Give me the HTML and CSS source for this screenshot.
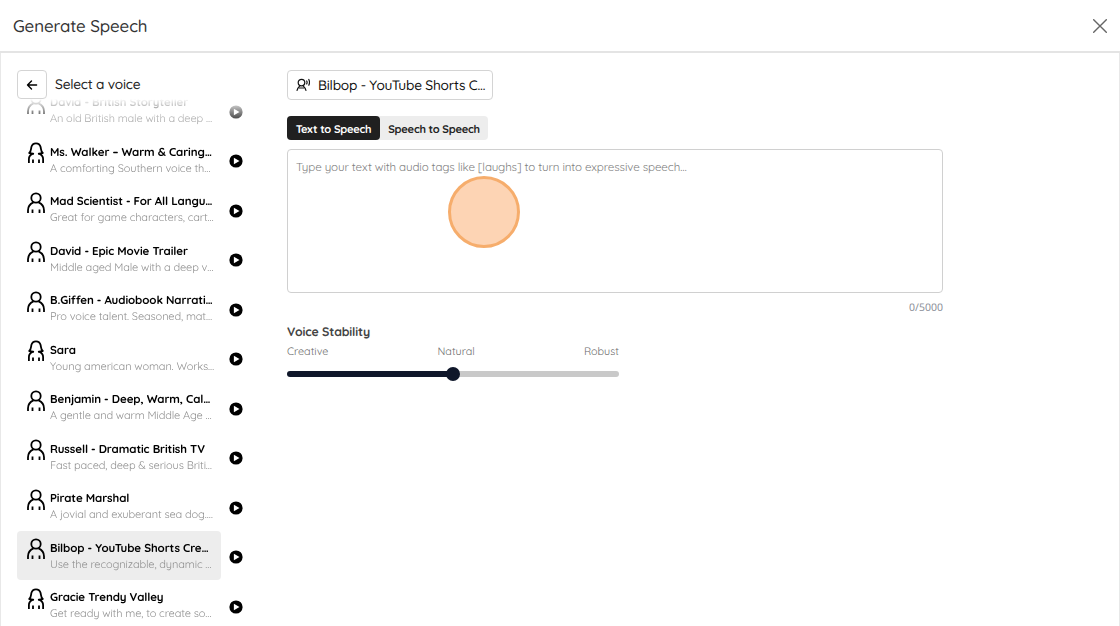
FILE: index.html
```html
<!DOCTYPE html>
<html lang="en">
<head>
    <meta charset="UTF-8">
    <meta name="viewport" content="width=device-width, initial-scale=1.0">
    <title>Generate Speech</title>
    <link rel="stylesheet" href="styles.css">
</head>
<body>
    <!-- shared icons -->
    <svg class="icon-defs" aria-hidden="true">
        <symbol id="icon-male" viewBox="0 0 18 22">
            <circle cx="9" cy="6" r="4.700"/>
            <path d="M1 21v-2.700c0-3.800 2-6.300 5.400-7.900M17 21v-2.700c0-3.800-2-6.300-5.400-7.900M5.500 17.600v3.400M12.500 17.600v3.400"/>
        </symbol>
        <symbol id="icon-female" viewBox="0 0 18 22">
            <path d="M7 11.900L2.200 11C4.200 9.300 3.900 7 4.400 4.900C5 2.600 6.600 1.300 9 1.300S13 2.600 13.600 4.900C14.100 7 13.800 9.300 15.800 11L11 11.900M5.500 11.900C3 13 1.900 14.700 1.900 17v4M12.500 11.900C15 13 16.100 14.700 16.100 17v4M6 17.600v3.400M12 17.600v3.400"/>
        </symbol>
        <symbol id="icon-play" viewBox="0 0 14 14">
            <circle cx="7" cy="7" r="6.600"/>
            <path d="M4.900 3.700v6.600L10.500 7z"/>
        </symbol>
    </svg>

    <div class="header">
        <h1>Generate Speech</h1>
        <button class="close-btn" aria-label="Close">
            <svg viewBox="0 0 14 14"><path d="M.7.7l12.600 12.600M13.300.7L.7 13.300"/></svg>
        </button>
    </div>

    <div class="content">
        <div class="sidebar">
            <div class="sidebar-header">
                <button class="back-btn" aria-label="Back">
                    <svg viewBox="0 0 12 12"><path d="M10.600 6H1.500M5.500 2L1.500 6l4 4"/></svg>
                </button>
                <h2>Select a voice</h2>
            </div>

            <div class="voice-list">
                <div class="voice">
                    <div class="voice-card">
                        <svg class="avatar"><use href="#icon-male"/></svg>
                        <div class="voice-text">
                            <div class="name">David - British Storyteller</div>
                            <div class="desc">An old British male with a deep …</div>
                        </div>
                    </div>
                    <svg class="play"><use href="#icon-play"/></svg>
                </div>
                <div class="voice">
                    <div class="voice-card">
                        <svg class="avatar"><use href="#icon-female"/></svg>
                        <div class="voice-text">
                            <div class="name">Ms. Walker – Warm &amp; Caring…</div>
                            <div class="desc">A comforting Southern voice th…</div>
                        </div>
                    </div>
                    <svg class="play"><use href="#icon-play"/></svg>
                </div>
                <div class="voice">
                    <div class="voice-card">
                        <svg class="avatar"><use href="#icon-male"/></svg>
                        <div class="voice-text">
                            <div class="name">Mad Scientist - For All Langu…</div>
                            <div class="desc">Great for game characters, cart…</div>
                        </div>
                    </div>
                    <svg class="play"><use href="#icon-play"/></svg>
                </div>
                <div class="voice">
                    <div class="voice-card">
                        <svg class="avatar"><use href="#icon-male"/></svg>
                        <div class="voice-text">
                            <div class="name">David - Epic Movie Trailer</div>
                            <div class="desc">Middle aged Male with a deep v…</div>
                        </div>
                    </div>
                    <svg class="play"><use href="#icon-play"/></svg>
                </div>
                <div class="voice">
                    <div class="voice-card">
                        <svg class="avatar"><use href="#icon-male"/></svg>
                        <div class="voice-text">
                            <div class="name">B.Giffen - Audiobook Narrati…</div>
                            <div class="desc">Pro voice talent. Seasoned, mat…</div>
                        </div>
                    </div>
                    <svg class="play"><use href="#icon-play"/></svg>
                </div>
                <div class="voice">
                    <div class="voice-card">
                        <svg class="avatar"><use href="#icon-female"/></svg>
                        <div class="voice-text">
                            <div class="name">Sara</div>
                            <div class="desc">Young american woman. Works…</div>
                        </div>
                    </div>
                    <svg class="play"><use href="#icon-play"/></svg>
                </div>
                <div class="voice">
                    <div class="voice-card">
                        <svg class="avatar"><use href="#icon-male"/></svg>
                        <div class="voice-text">
                            <div class="name">Benjamin - Deep, Warm, Cal…</div>
                            <div class="desc">A gentle and warm Middle Age …</div>
                        </div>
                    </div>
                    <svg class="play"><use href="#icon-play"/></svg>
                </div>
                <div class="voice">
                    <div class="voice-card">
                        <svg class="avatar"><use href="#icon-male"/></svg>
                        <div class="voice-text">
                            <div class="name">Russell - Dramatic British TV</div>
                            <div class="desc">Fast paced, deep &amp; serious Briti…</div>
                        </div>
                    </div>
                    <svg class="play"><use href="#icon-play"/></svg>
                </div>
                <div class="voice">
                    <div class="voice-card">
                        <svg class="avatar"><use href="#icon-male"/></svg>
                        <div class="voice-text">
                            <div class="name">Pirate Marshal</div>
                            <div class="desc">A jovial and exuberant sea dog.…</div>
                        </div>
                    </div>
                    <svg class="play"><use href="#icon-play"/></svg>
                </div>
                <div class="voice">
                    <div class="voice-card selected">
                        <svg class="avatar"><use href="#icon-male"/></svg>
                        <div class="voice-text">
                            <div class="name">Bilbop - YouTube Shorts Cre…</div>
                            <div class="desc">Use the recognizable, dynamic …</div>
                        </div>
                    </div>
                    <svg class="play"><use href="#icon-play"/></svg>
                </div>
                <div class="voice">
                    <div class="voice-card">
                        <svg class="avatar"><use href="#icon-female"/></svg>
                        <div class="voice-text">
                            <div class="name">Gracie Trendy Valley</div>
                            <div class="desc">Get ready with me, to create so…</div>
                        </div>
                    </div>
                    <svg class="play"><use href="#icon-play"/></svg>
                </div>
            </div>
        </div>

        <div class="main">
            <button class="voice-btn">
                <svg viewBox="0 0 14 14">
                    <circle cx="5.500" cy="4.600" r="3.300"/>
                    <path d="M1 12.500c.3-2 1.500-3.300 3-4.800M10 12.500c-.3-2-1.500-3.300-3-4.800M3.500 10h4M10.700 3c.5.900.5 2 0 2.900M12.800 1.500c.8 1.600.8 4.100 0 5.700"/>
                </svg>
                <span>Bilbop - YouTube Shorts C…</span>
            </button>

            <div class="tabs">
                <button class="tab active">Text to Speech</button>
                <button class="tab">Speech to Speech</button>
            </div>

            <div class="editor">
                <textarea placeholder="Type your text with audio tags like [laughs] to turn into expressive speech…"></textarea>
                <div class="pointer-mark"></div>
            </div>
            <div class="counter">0/5000</div>

            <div class="stability">
                <h3>Voice Stability</h3>
                <div class="labels">
                    <span>Creative</span>
                    <span>Natural</span>
                    <span>Robust</span>
                </div>
                <div class="slider">
                    <div class="slider-fill"></div>
                    <div class="slider-thumb"></div>
                    <div class="slider-rest"></div>
                </div>
            </div>
        </div>
    </div>
</body>
</html>
```
FILE: styles.css
```css
* {
    margin: 0;
    padding: 0;
    box-sizing: border-box;
}

body {
    height: 626px;
    overflow: hidden;
    background: #fff;
    color: #000;
    font-family: Quicksand, Lato, sans-serif;
    text-rendering: geometricPrecision;
    display: flex;
    flex-direction: column;
}

button,
textarea {
    text-rendering: inherit;
}

button {
    background: #fff;
    border: none;
    font-family: inherit;
    cursor: pointer;
}

svg {
    fill: none;
    stroke: currentColor;
    stroke-linecap: round;
    stroke-linejoin: round;
    flex-shrink: 0;
}

.icon-defs {
    display: none;
}

.header {
    height: 53px;
    flex-shrink: 0;
    display: flex;
    align-items: center;
    justify-content: space-between;
    padding: 0 13px;
    border-bottom: 2px solid #e4e4e4;
}

.header h1 {
    padding-top: 2px;
    font-size: 16.9px;
    font-weight: 500;
    letter-spacing: -0.12px;
    color: #333;
}

.close-btn {
    width: 14px;
    height: 14px;
}

.close-btn svg {
    display: block;
    width: 14px;
    height: 14px;
    stroke: #666;
    stroke-width: 1.4;
}

.content {
    flex: 1;
    min-height: 0;
    display: flex;
    border-left: 1px solid #e8e8e8;
    border-right: 1px solid #e8e8e8;
}

.sidebar {
    width: 286px;
    padding: 17px 0 0 16px;
    display: flex;
    flex-direction: column;
}

.sidebar-header {
    height: 29px;
    display: flex;
    align-items: center;
    gap: 8px;
}

.sidebar-header h2 {
    font-size: 13.7px;
    font-weight: 500;
    letter-spacing: -0.22px;
    color: #222;
}

.back-btn {
    width: 30px;
    height: 29px;
    display: flex;
    align-items: center;
    justify-content: center;
    border: 1px solid #d4d4d4;
    border-radius: 4px;
}

.back-btn svg {
    width: 12px;
    height: 12px;
    stroke-width: 1.4;
}

.voice-list {
    flex: 1;
    min-height: 0;
    overflow: hidden;
    -webkit-mask-image: linear-gradient(to bottom, transparent, #000 28px);
    mask-image: linear-gradient(to bottom, transparent, #000 28px);
}

.voice {
    height: 49.5px;
    display: flex;
    align-items: center;
    gap: 8.5px;
}

.voice:first-child {
    margin-top: -13.5px;
}

.voice-card {
    width: 204px;
    height: 49px;
    display: flex;
    padding: 7.5px 0 0 9.500px;
    gap: 5.5px;
    border-radius: 4px;
}

.voice-card.selected {
    background: #ededed;
}

.avatar {
    width: 18px;
    height: 22px;
    margin-top: -0.5px;
    stroke-width: 1.8;
    stroke-linecap: butt;
}

.voice-text {
    white-space: nowrap;
}

.name {
    font-size: 11.5px;
    font-weight: 700;
    line-height: 17px;
    letter-spacing: -0.09px;
}

.desc {
    font-size: 11px;
    line-height: 17px;
    letter-spacing: -0.12px;
    color: #909090;
}

.play {
    width: 14px;
    height: 14px;
    margin-top: 3px;
    margin-left: -0.5px;
    stroke: none;
}

#icon-play circle {
    fill: #000;
}

#icon-play path {
    fill: #fff;
}

.main {
    width: 656px;
    padding-top: 17px;
    display: flex;
    flex-direction: column;
    align-items: flex-start;
}

.voice-btn {
    width: 206px;
    height: 30px;
    display: flex;
    align-items: center;
    gap: 8px;
    padding-left: 8px;
    border: 1px solid #d4d4d4;
    border-radius: 4px;
    font-size: 13.7px;
    font-weight: 500;
    letter-spacing: -0.22px;
    color: #111;
    white-space: nowrap;
}

.voice-btn svg {
    width: 14px;
    height: 14px;
    stroke-width: 1.2;
}

.tabs {
    display: flex;
    height: 24px;
    margin-top: 16px;
    background: #ededed;
    border-radius: 4px;
}

.tab {
    width: 108px;
    padding-top: 1px;
    background: transparent;
    border-radius: 4px;
    color: #222;
    font-size: 11.1px;
    font-weight: 700;
    letter-spacing: -0.25px;
    white-space: nowrap;
}

.tab.active {
    width: 93px;
    background: #202020;
    color: #fff;
}

.editor {
    position: relative;
    width: 656px;
    height: 144px;
    margin-top: 9px;
}

.editor textarea {
    display: block;
    width: 100%;
    height: 100%;
    padding: 9px 8px;
    border: 1px solid #d0d0d0;
    border-radius: 4px;
    resize: none;
    font-family: inherit;
    font-size: 11.6px;
    line-height: 16px;
    letter-spacing: -0.12px;
}

.editor textarea::placeholder {
    color: #808080;
    opacity: 1;
}

/* highlight circle drawn over the text field */
.pointer-mark {
    position: absolute;
    left: 161px;
    top: 27px;
    width: 72px;
    height: 72px;
    border: 3px solid #f6ad6c;
    border-radius: 50%;
    background: #fdd4b4;
}

.counter {
    align-self: flex-end;
    margin-top: 7px;
    font-family: "Noto Sans", sans-serif;
    font-size: 10.5px;
    line-height: 16px;
    color: #8b8f98;
}

.stability {
    width: 332px;
    margin-top: 8px;
}

.stability h3 {
    font-size: 12.3px;
    line-height: 18px;
    letter-spacing: -0.12px;
    color: #444;
}

.labels {
    display: flex;
    justify-content: space-between;
    margin-top: 1px;
    font-size: 10.8px;
    line-height: 16px;
    color: #6c6c6c;
}

.slider {
    height: 14px;
    margin-top: 8px;
    display: flex;
    align-items: center;
}

.slider-fill,
.slider-rest {
    flex: 1;
    height: 6px;
}

.slider-fill {
    background: #0f172a;
    border-radius: 3px 0 0 3px;
}

.slider-rest {
    background: #c9c9c9;
    border-radius: 0 3px 3px 0;
}

.slider-thumb {
    width: 14px;
    height: 14px;
    border-radius: 50%;
    background: #0f172a;
    margin: 0 -1px;
    z-index: 1;
}
```
